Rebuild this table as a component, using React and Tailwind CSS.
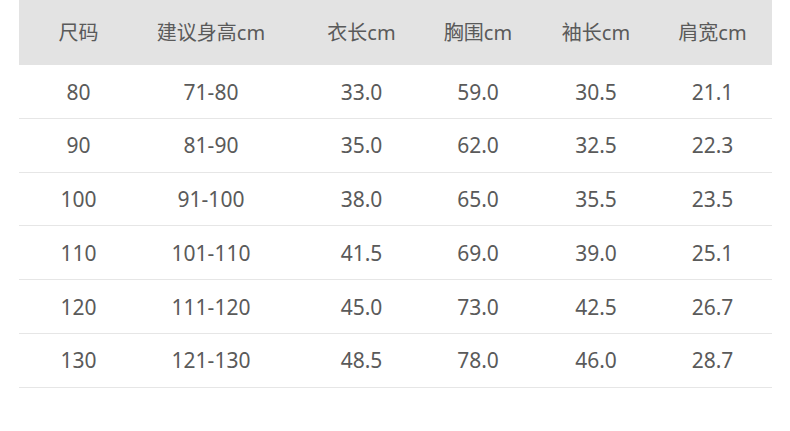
import React from 'react';

const headers = ['尺码', '建议身高cm', '衣长cm', '胸围cm', '袖长cm', '肩宽cm'];

const rows = [
  ['80', '71-80', '33.0', '59.0', '30.5', '21.1'],
  ['90', '81-90', '35.0', '62.0', '32.5', '22.3'],
  ['100', '91-100', '38.0', '65.0', '35.5', '23.5'],
  ['110', '101-110', '41.5', '69.0', '39.0', '25.1'],
  ['120', '111-120', '45.0', '73.0', '42.5', '26.7'],
  ['130', '121-130', '48.5', '78.0', '46.0', '28.7'],
];

const cols = 'grid grid-cols-[119px_146px_155px_78px_158px_75px_1fr]';

export default function App() {
  return (
    <div
      className="w-[790px] h-[431px] bg-white text-[#5a5a5a]"
      style={{ fontFamily: '"Noto Sans", "Noto Sans CJK SC", sans-serif' }}
    >
      <div className="ml-[19px] w-[753px]">
        {/* Header */}
        <div className={`${cols} h-[65px] items-center bg-[#e3e3e3] text-[20px]`}>
          {headers.map((h) => (
            <div key={h} className="flex justify-center whitespace-nowrap">{h}</div>
          ))}
        </div>

        {/* Body */}
        {rows.map((r) => (
          <div
            key={r[0]}
            className={`${cols} h-[53.75px] pt-[2px] items-center border-b border-[#e6e6e6] text-[21px]`}
          >
            {r.map((v, i) => (
              <div key={i} className="flex justify-center whitespace-nowrap">{v}</div>
            ))}
          </div>
        ))}
      </div>
    </div>
  );
}
